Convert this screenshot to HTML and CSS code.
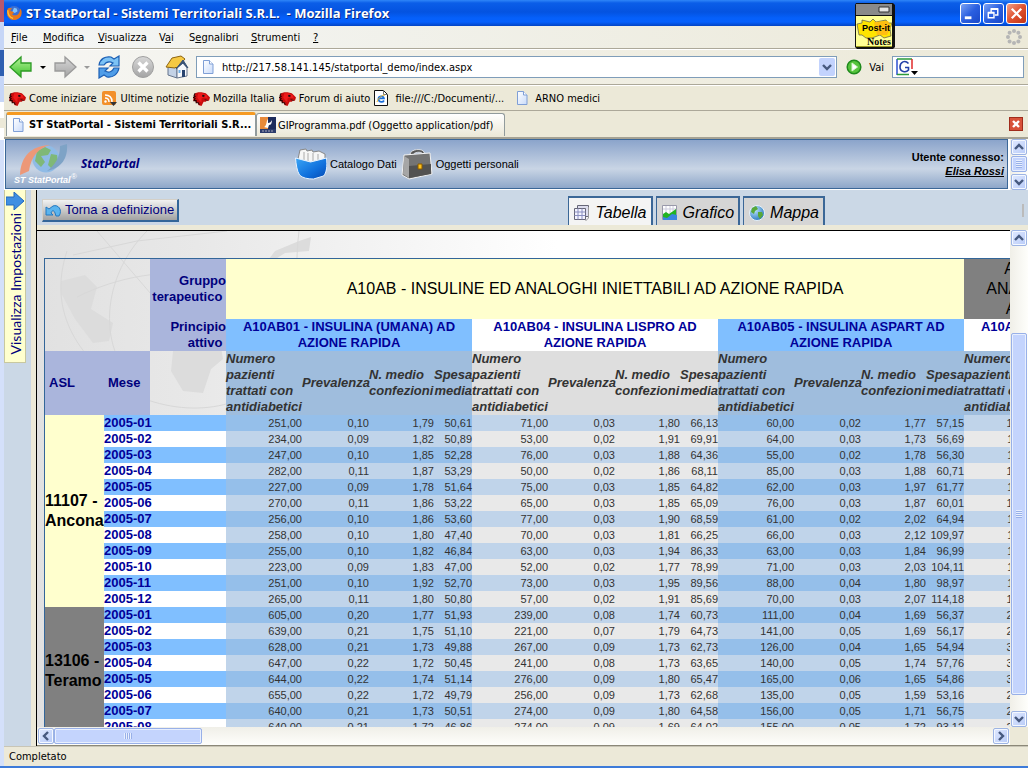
FILE: index.html
```html
<!DOCTYPE html>
<html lang="it">
<head>
<meta charset="utf-8">
<title>ST StatPortal - Sistemi Territoriali S.R.L.</title>
<link rel="stylesheet" href="styles.css">
</head>
<body>
<svg class="defs" aria-hidden="true">
  <defs>
    <linearGradient id="g-green" x1="0" y1="0" x2="0" y2="1"><stop offset="0" stop-color="#b6f29a"/><stop offset="1" stop-color="#3cc02c"/></linearGradient>
    <linearGradient id="g-grey" x1="0" y1="0" x2="0" y2="1"><stop offset="0" stop-color="#d8d8d8"/><stop offset="1" stop-color="#a4a4a4"/></linearGradient>
    <linearGradient id="g-blue" x1="0" y1="0" x2="1" y2="1"><stop offset="0" stop-color="#3ba6f6"/><stop offset=".6" stop-color="#0f6fdc"/><stop offset="1" stop-color="#0648b0"/></linearGradient>
    <linearGradient id="g-page" x1="0" y1="0" x2="1" y2="1"><stop offset="0" stop-color="#ffffff"/><stop offset="1" stop-color="#c9dbfa"/></linearGradient>
    <radialGradient id="g-globe" cx=".35" cy=".3" r=".8"><stop offset="0" stop-color="#bfe6ff"/><stop offset="1" stop-color="#1c6fb8"/></radialGradient>
    <symbol id="up" viewBox="0 0 10 10"><path d="M1 7 5 3l4 4" fill="none" stroke="#46597f" stroke-width="2.4"/></symbol>
    <symbol id="down" viewBox="0 0 10 10"><path d="M1 3l4 4 4-4" fill="none" stroke="#46597f" stroke-width="2.4"/></symbol>
    <symbol id="left" viewBox="0 0 10 10"><path d="M7 1 3 5l4 4" fill="none" stroke="#46597f" stroke-width="2.4"/></symbol>
    <symbol id="right" viewBox="0 0 10 10"><path d="M3 1l4 4-4 4" fill="none" stroke="#46597f" stroke-width="2.4"/></symbol>
    <symbol id="page" viewBox="0 0 12 14"><path d="M1.5.5h6l3.500 3.500v9.500h-9.500z" fill="url(#g-page)" stroke="#7f9fd6"/><path d="M7.500.5v3.500h3.500" fill="#fff" stroke="#7f9fd6"/></symbol>
    <symbol id="dino" viewBox="0 0 16 14"><path d="M1 5 2 2l3-1 3 0 4 1 2 2 2 2-1 3-2 0-1 1-2 0-2 4-3-1 0-2-2 0-1-2-2 0z" fill="#c80c0c"/><path d="M5 2l4 0 4 2 1 3-4-1-2 1 0 4-2-2-2-3z" fill="#ee1a1a"/><path d="M2 2 1 4l1 1-2 1 2 1-1 2 2 0 0 2 2 0 1 2" fill="none" stroke="#2a0000"/><path d="M9 4h1.500v1H9zM11 8l3 1" fill="#111" stroke="#111" stroke-width=".6"/></symbol>
  </defs>
</svg>

<div class="desktop">
  <div class="behind"></div>
  <div class="window">
    <header class="titlebar">
      <svg class="i18" viewBox="0 0 18 18"><circle cx="9" cy="9" r="8" fill="#3d6fd2"/><path d="M9 3l3 1 1 3-3 2-3-1z" fill="#7fc3ff"/><path d="M2 4c-2 5-1 9 3 12 5 2 10 0 12-4 1-3 1-6-1-8 0 3-1 5-3 7-2 1-5 1-6-1l2-1c-1-2-2-2-4-2 0-2 1-2 2-3-2-1-4-1-5 0z" fill="#e8771a"/><path d="M2 6c0 5 2 8 6 9" fill="none" stroke="#ffc33a" stroke-width="1.500"/></svg>
      <h1>ST StatPortal - Sistemi Territoriali S.R.L. &nbsp;- Mozilla Firefox</h1>
      <div class="win-buttons">
        <button type="button" class="wb" aria-label="Riduci a icona"><svg viewBox="0 0 20 20"><path d="M4 13h7v3h-7z" fill="#fff"/></svg></button>
        <button type="button" class="wb" aria-label="Ripristina"><svg viewBox="0 0 20 20"><path d="M7.500 9V5.500h7v6h-3M7 5h8" fill="none" stroke="#fff" stroke-width="1.500"/><path d="M4.500 9.500h6v5h-6zM4 9h7" fill="none" stroke="#fff" stroke-width="1.500"/></svg></button>
        <button type="button" class="wb wb-close" aria-label="Chiudi"><svg viewBox="0 0 20 20"><path d="M5 5l10 10M15 5 5 15" stroke="#fff" stroke-width="2.400"/></svg></button>
      </div>
      <div class="postit">
        <svg viewBox="0 0 41 47"><path d="M2 1h37l2 2v42l-2 2H3l-2-2V3z" fill="#111"/><path d="M2 2h36v11H2z" fill="#8a8a8a"/><path d="M25 5h10v5h-10z" fill="#e4e4e4" stroke="#333"/><path d="M2 14h36v30H2z" fill="#ffff94"/><path d="M2 44h36v1H2z" fill="#9a9a20"/><path d="M3 22l5-1 0-3 8 2 3-3 3 3 10-2 2 3 4 0-2 6 1 7-7 2-4-3-8 3-6 0-4-3-3 0z" fill="#ffe400" stroke="#555" stroke-width=".7"/><path d="M20 20l14-1 3 6-4 8-10 0z" fill="#ffbe12"/><text x="8" y="29" class="pi-a">Post-it</text><text x="13" y="43" class="pi-b">Notes</text></svg>
      </div>
    </header>

    <nav class="menubar">
      <button type="button" class="m1"><u>F</u>ile</button>
      <button type="button" class="m2"><u>M</u>odifica</button>
      <button type="button" class="m3"><u>V</u>isualizza</button>
      <button type="button" class="m4">V<u>a</u>i</button>
      <button type="button" class="m5">S<u>e</u>gnalibri</button>
      <button type="button" class="m6"><u>S</u>trumenti</button>
      <button type="button" class="m7"><u>?</u></button>
      <svg class="throbber" viewBox="0 0 16 16" fill="#b5b5b5"><circle cx="8" cy="2" r="2"/><circle cx="12.400" cy="3.800" r="2"/><circle cx="14" cy="8" r="2"/><circle cx="12.400" cy="12.400" r="2"/><circle cx="8" cy="14" r="2"/><circle cx="3.600" cy="12.400" r="2"/><circle cx="2" cy="8" r="2"/><circle cx="3.600" cy="3.800" r="2"/></svg>
    </nav>

    <div class="toolbar">
      <button type="button" aria-label="Indietro"><svg width="24" height="24" viewBox="0 0 24 24"><path d="M1 12 12 2v6h10v8H12v6z" fill="url(#g-green)" stroke="#2c9a24" stroke-width="1.300"/></svg></button>
      <span class="caret"></span>
      <button type="button" aria-label="Avanti"><svg width="24" height="24" viewBox="0 0 24 24"><path d="M23 12 12 2v6H2v8h10v6z" fill="url(#g-grey)" stroke="#9a9a9a" stroke-width="1.300"/></svg></button>
      <span class="caret caret-off"></span>
      <button type="button" aria-label="Ricarica"><svg width="24" height="24" viewBox="0 0 24 24"><path d="M2 10C3 4 8 1 14 2l3 2 5-3v10h-9l3-3c-4-2-7-1-9 2z" fill="#7cc2f5" stroke="#1c5fb4" stroke-width="1.200"/><path d="M22 13c-1 6-6 10-12 9l-3-2-5 3V13h9l-3 3c4 2 7 1 9-3z" fill="#4f9de8" stroke="#1c5fb4" stroke-width="1.200"/></svg></button>
      <button type="button" class="stop" aria-label="Ferma"><svg width="24" height="24" viewBox="0 0 24 24"><circle cx="12" cy="12" r="10.500" fill="url(#g-grey)" stroke="#a0a0a0"/><path d="M7.500 7.500l9 9M16.500 7.500l-9 9" stroke="#fff" stroke-width="3.200"/></svg></button>
      <button type="button" class="home" aria-label="Pagina iniziale"><svg width="24" height="24" viewBox="0 0 24 24"><path d="M3 11v9l9 3V11L8 5z" fill="#c3d2e6" stroke="#66758c"/><path d="M12 23V13l5-6 5 6v8z" fill="#f7f9fc" stroke="#66758c"/><path d="M1 12 7 3l9-2 4 3-8 9-1-1-1 1z" fill="#f6c943" stroke="#8e6410"/><path d="M11 14l7-9 5 8-5-5z" fill="#3a5478" stroke="#3a5478"/><path d="M17 15h3v7l-3 0z" fill="#27436e"/><path d="M13.500 15h2v3h-2z" fill="#6fb0e8"/></svg></button>
      <label class="address"><svg width="12" height="14"><use href="#page"/></svg><input type="text" aria-label="Indirizzo" value="http://217.58.141.145/statportal_demo/index.aspx"><span class="drop"><svg width="10" height="10"><use href="#down"/></svg></span></label>
      <button type="button" class="go"><svg width="16" height="16" viewBox="0 0 16 16"><circle cx="8" cy="8" r="6.800" fill="#56c43c" stroke="#1f8a1c" stroke-width="1.500"/><path d="M6 4l5.500 4L6 12z" fill="#fff" stroke="#d6f4cc"/></svg><span>Vai</span></button>
      <label class="search"><svg width="22" height="18" viewBox="0 0 22 18"><path d="M1 17V1" stroke="#2c50d0" stroke-width="1.500"/><path d="M1 1h15M1 16.500h12" stroke="#2b9a3a" stroke-width="1.500"/><path d="M16 1v10" stroke="#e02a2a" stroke-width="1.500"/><path d="M12.500 5.500C9 1.500 4 4 4 9c0 5 6 6 8.500 3V9.500H9" fill="none" stroke="#2340a8" stroke-width="1.600"/><path d="M15 13h7l-3.500 4z" fill="#000"/></svg><input type="text" aria-label="Cerca"></label>
    </div>

    <div class="bookmarks">
      <a href="#"><svg width="17" height="15"><use href="#dino"/></svg>Come iniziare</a>
      <a href="#"><svg width="17" height="15" viewBox="0 0 17 15"><rect x="1" y="0" width="14" height="14" rx="2" fill="#f2902a"/><path d="M4 4c5 0 7 3 7 7M4 7c3 0 4 2 4 4" fill="none" stroke="#fff" stroke-width="1.500"/><circle cx="4.500" cy="10.500" r="1.200" fill="#fff"/><path d="M9 11h7l-3.500 4z" fill="#333"/></svg>Ultime notizie</a>
      <a href="#"><svg width="17" height="15"><use href="#dino"/></svg>Mozilla Italia</a>
      <a href="#"><svg width="17" height="15"><use href="#dino"/></svg>Forum di aiuto</a>
      <a href="#" class="bm-file"><svg width="14" height="16" viewBox="0 0 14 16"><path d="M.5.5h9l4 4v11H.5z" fill="#fff" stroke="#111"/><path d="M9.500.5v4h4" fill="none" stroke="#777"/><path d="M10 10.500c-1 2-5 2-5.500-1C4 6 9.500 5 10 8.500H5" fill="none" stroke="#1b6fd8" stroke-width="1.700"/><path d="M3 12C4 8 8 5 11 5" fill="none" stroke="#e8b52a"/></svg>file:///C:/Documenti/...</a>
      <a href="#" class="bm-arno"><svg width="12" height="14"><use href="#page"/></svg>ARNO medici</a>
    </div>

    <div class="tabs">
      <button type="button" class="tab tab-on"><svg width="12" height="14"><use href="#page"/></svg><span>ST StatPortal - Sistemi Territoriali S.R...</span></button>
      <button type="button" class="tab"><svg width="16" height="16" viewBox="0 0 16 16"><path d="M0 0h8v12H0z" fill="#e88a3a"/><path d="M8 0h8v12H8z" fill="#1d2c5c"/><path d="M4 10c3-1 2-6 4-8v4c2 0 3-1 4-3 0 3-1 5-3 5l-1 3z" fill="#fff"/><path d="M0 12h16v4H0z" fill="#2c3c6c"/><path d="M2 14h12" stroke="#aab" stroke-dasharray="2 1"/></svg><span>GIProgramma.pdf (Oggetto application/pdf)</span></button>
      <button type="button" class="tab-close" aria-label="Chiudi scheda"><svg width="14" height="14" viewBox="0 0 14 14"><rect x=".5" y=".5" width="13" height="13" fill="#d8523a" stroke="#a02c1c"/><path d="M4 4l6 6M10 4l-6 6" stroke="#fff" stroke-width="2.400"/></svg></button>
    </div>

    <div class="header-frame">
      <div class="portal">
        <svg class="logo" width="68" height="44" viewBox="0 0 68 44"><circle cx="33" cy="17" r="13.500" fill="#8fbbe6"/><path d="M24 9l8-4 6 3-3 5-7 1 4 6-4 5-6-6zM38 12l6 1 1 7-6 7-4-4z" fill="#7fb878"/><path d="M7 33C8 14 18 4 37 3c-11 3-19 11-21 26z" fill="#ec9878"/><path d="M47 4l7-2c1 14-5 24-20 27 8-6 13-13 13-25z" fill="#7ea3c6"/><text x="1" y="41" class="logo-t">ST StatPortal</text><text x="58" y="37" class="logo-r">®</text></svg>
        <strong class="brand">StatPortal</strong>
        <a href="#" class="pl"><svg width="32" height="32" viewBox="0 0 32 32"><path d="M3 11 5 2l6-1 1 2 5-1 1 2 6-1 6 3v8l-14 4z" fill="#f6f6f6" stroke="#888"/><path d="M9 4v8M13 5v8M18 5v9M23 6v6" stroke="#aaa"/><path d="M.5 10l15 4 16-4c1 8 0 15-3 18l-10 3c-6 0-11-1-14-4C2 23 1 16 .5 10z" fill="url(#g-blue)" stroke="#e6f2ff"/></svg>Catalogo Dati</a>
        <a href="#" class="pl"><svg width="32" height="32" viewBox="0 0 32 32"><path d="M9 6c1-5 12-6 14-2l1 3-2-1c-2-3-9-2-10 1z" fill="#555" stroke="#fff" stroke-width=".7"/><path d="M3 7l26-2 2 21-23 5-7-4z" fill="#747474" stroke="#f2f2f2"/><path d="M3 8l5 3 0 19-6-4z" fill="#a6a6a6"/><path d="M8 18l22-2v10L8 30z" fill="#525252"/><path d="M17 16h4v5h-4z" fill="#ffc21a" stroke="#8a5a00"/></svg>Oggetti personali</a>
        <p class="user">Utente connesso:<a href="#">Elisa Rossi</a></p>
      </div>
      <div class="vscroll">
        <button type="button" class="sb" aria-label="Su"><svg width="10" height="10"><use href="#up"/></svg></button>
        <span class="thumb thumb-s"></span>
        <button type="button" class="sb end" aria-label="Giù"><svg width="10" height="10"><use href="#down"/></svg></button>
      </div>
    </div>

    <div class="work">
      <aside class="side">
        <button type="button" class="side-tab"><svg width="18" height="18" viewBox="0 0 18 18"><path d="M0 5h8V0l10 9-10 9v-5H0z" fill="#3f8fe2" stroke="#2268bc"/></svg><span>Visualizza Impostazioni</span></button>
      </aside>
      <main class="main">
        <div class="actions">
          <button type="button" class="back"><svg width="16" height="14" viewBox="0 0 16 14"><path d="M1 4v8h7L6 10c1-3 3-3 4 0l1 3h3c4-6-1-12-6-10L4 6z" fill="#5bb4ee" stroke="#2478c0"/></svg>Torna a definizione</button>
          <div class="views">
            <button type="button" class="view view-on"><svg width="18" height="18" viewBox="0 0 18 18"><path d="M4.500 1.500h11v11h-11z" fill="#dde" stroke="#667"/><path d="M1.500 4.500h11v11h-11z" fill="#f4f4ff" stroke="#667"/><path d="M1.500 8h11M1.500 11.500h11M5 4.500v11M9 4.500v11" stroke="#8a8fc0"/><path d="M15.500 3v11l-3 3" fill="none" stroke="#999"/></svg>Tabella</button>
            <button type="button" class="view"><svg width="18" height="18" viewBox="0 0 18 18"><path d="M1.500 1.500h14v14h-14z" fill="#fff" stroke="#99a"/><path d="M5 2v8M9 2v8M12 2v5M2 5h13" stroke="#ccd"/><path d="M2 15v-5l3-2 3 2 7-5v10z" fill="#22b422"/><path d="M2 16v-3l4 1 5-4 5 1v5z" fill="#3a86e0"/></svg>Grafico</button>
            <button type="button" class="view"><svg width="18" height="18" viewBox="0 0 18 18"><circle cx="9" cy="9" r="7.500" fill="url(#g-globe)" stroke="#e8f2fa"/><path d="M4 4l4-2 2 3-3 2-1 3-3-2zM10 8l4 0 1 3-3 4-2-3z" fill="#58a838"/></svg>Mappa</button>
          </div>
          <span class="grip"></span>
        </div>
        <div class="data-frame">
          <div class="canvas">
            <svg class="world" width="530" height="370" viewBox="0 0 530 370" fill="none" stroke="#d8d8d8" stroke-width="1"><path d="M24 50l24-6 12 12-6 22 22 14-4 18-16 2-18-24-14-26zM136 120l12-14 34-2 4 24-12 10-8 24-20-2-12-20z" fill="#dcdcdc" stroke="none"/><path d="M226 36l22-14 24-2 2-14-12 4-24 10z" fill="#dcdcdc" stroke="none"/><path d="M36 24 100 10 190 0M40 66c40-20 90-30 140-20M30 20c-20 60 10 110 70 145 60 25 120 10 150-35M110 0c-50 50-50 130 0 160M60 0l60 70M262 0c-4 30 0 60-10 90"/></svg>
            <table class="grid">
              <colgroup>
                <col class="c-asl"><col class="c-mese"><col class="c-num">
                <col class="c-num"><col class="c-prev"><col class="c-conf"><col class="c-spesa">
                <col class="c-num"><col class="c-prev"><col class="c-conf"><col class="c-spesa">
                <col class="c-num"><col class="c-prev"><col class="c-conf"><col class="c-spesa">
                <col class="c-num"><col class="c-rest">
              </colgroup>
              <thead>
                <tr class="r-group">
                  <td colspan="2" rowspan="2"></td>
                  <th class="dim">Gruppo<br>terapeutico&nbsp;</th>
                  <th colspan="12" class="g-yellow">A10AB - INSULINE ED ANALOGHI INIETTABILI AD AZIONE RAPIDA</th>
                  <th colspan="2" class="g-grey">A10AC - INSULINE ED ANALOGHI INIETTABILI AD AZIONE INTERMEDIA</th>
                </tr>
                <tr class="r-drug">
                  <th class="dim">Principio<br>attivo&nbsp;</th>
                  <th colspan="4" class="sky">A10AB01 - INSULINA (UMANA) AD AZIONE RAPIDA</th>
                  <th colspan="4" class="white">A10AB04 - INSULINA LISPRO AD AZIONE RAPIDA</th>
                  <th colspan="4" class="sky">A10AB05 - INSULINA ASPART AD AZIONE RAPIDA</th>
                  <th colspan="2" class="white">A10AC01 - INSULINA (UMANA) AD AZIONE RAPIDA</th>
                </tr>
                <tr class="r-measure">
                  <th class="dim axis">ASL</th><th class="dim axis">Mese</th><td></td>
                  <th class="ms">Numero pazienti trattati con antidiabetici</th><th class="ms">Prevalenza</th><th class="ms">N. medio confezioni</th><th class="ms rt">Spesa media</th>
                  <th class="ms mg">Numero pazienti trattati con antidiabetici</th><th class="ms mg">Prevalenza</th><th class="ms mg">N. medio confezioni</th><th class="ms mg rt">Spesa media</th>
                  <th class="ms">Numero pazienti trattati con antidiabetici</th><th class="ms">Prevalenza</th><th class="ms">N. medio confezioni</th><th class="ms rt">Spesa media</th>
                  <th class="ms">Numero pazienti trattati con antidiabetici</th><th class="ms"></th>
                </tr>
              </thead>
              <tbody id="rows"></tbody>
            </table>
          </div>
          <div class="vscroll">
            <button type="button" class="sb" aria-label="Su"><svg width="10" height="10"><use href="#up"/></svg></button>
            <span class="track-a"></span>
            <span class="thumb thumb-l"></span>
            <span class="track-b"></span>
            <button type="button" class="sb" aria-label="Giù"><svg width="10" height="10"><use href="#down"/></svg></button>
          </div>
          <div class="hscroll">
            <button type="button" class="sb" aria-label="Sinistra"><svg width="10" height="10"><use href="#left"/></svg></button>
            <span class="thumb thumb-h"></span>
            <button type="button" class="sb end" aria-label="Destra"><svg width="10" height="10"><use href="#right"/></svg></button>
          </div>
          <span class="corner"></span>
        </div>
      </main>
    </div>
    <footer class="status">Completato</footer>
  </div>
</div>
<script src="table.js"></script>
</body>
</html>
```
FILE: styles.css
```css
* { box-sizing: border-box; }
body {
  margin: 0;
  background: #ece9d8;
  color: #000;
  font: 11px "DejaVu Sans Condensed", "DejaVu Sans", sans-serif;
}
button { margin: 0; padding: 0; border: 0; background: none; color: inherit; font: inherit; }
input { border: 0; padding: 0; background: none; font: inherit; min-width: 0; flex: 1; outline: 0; }
a { color: inherit; text-decoration: none; }
svg { display: block; flex: none; }
.defs { position: absolute; width: 0; height: 0; }

.desktop { display: flex; height: 100vh; overflow: hidden; border-bottom: 2px solid #3d7bd9; }
.behind { flex: none; width: 4px; background: linear-gradient(#b7586e 0 22px, #c6d6f7 22px 50px, #2f5fb0 50px 76px, #c6d6f7 76px 102px, #fff 102px 118px, #ece9d8 118px 128px, #fff 128px 140px, #d4e0fa 140px); }
.window { flex: 1; min-width: 0; display: flex; flex-direction: column; }

.titlebar {
  position: relative; flex: none; height: 26px; display: flex; align-items: center; gap: 4px; padding: 0 1px 0 2px;
  background: linear-gradient(#2f86f8 0, #0b5ee8 3px, #0453e0 12px, #0560fa 18px, #0660fc 22px, #0344c4 26px);
}
.i18 { width: 16px; height: 16px; }
.titlebar h1 { margin: 0; flex: 1; color: #fff; font: bold 13px "Open Sans", sans-serif; text-shadow: 1px 1px #0a2a80; }
.win-buttons { display: flex; gap: 2px; }
.wb { width: 21px; height: 21px; border: 1px solid #fff; border-radius: 3px; background: linear-gradient(135deg, #7aa2f4, #2a5fe0 50%, #1a48c8); }
.wb-close { background: linear-gradient(135deg, #f0a088, #e05230 50%, #c03414); }
.postit { position: absolute; z-index: 5; left: 850px; top: 2px; width: 41px; height: 47px; }
.pi-a { font: bold 9px "Liberation Sans", sans-serif; }
.pi-b { font: bold 10px "Liberation Serif", serif; }

.menubar { flex: none; height: 23px; display: flex; align-items: center; padding: 0 6px 0 7px; background: linear-gradient(90deg, #f4f6f6, #ece9d8); border-bottom: 1px solid #aca899; }
.m1 { width: 32px; } .m2 { width: 55px; } .m3 { width: 61px; } .m4 { width: 30px; }
.m5 { width: 62px; } .m6 { width: 62px; } .m7 { width: 10px; }
.menubar button { flex: none; text-align: left; white-space: nowrap; }
.throbber { width: 16px; height: 16px; margin-left: auto; }

.toolbar { flex: none; height: 36px; display: flex; align-items: center; gap: 7px; padding: 0 4px 0 5px; background: linear-gradient(90deg, #f6f6f3, #ece9d8); border-top: 1px solid #fff; border-bottom: 1px solid #aca899; }
.caret { width: 0; height: 0; border: 3px solid transparent; border-top-color: #000; border-bottom: 0; }
.caret-off { border-top-color: #999; }
.stop, .home { margin-left: 3px; }
.address { flex: 1; height: 22px; display: flex; align-items: center; gap: 8px; padding: 0 1px 0 5px; border: 1px solid #7f9db9; background: #fff; }
.drop { display: grid; place-items: center; width: 16px; height: 18px; background: #c3d3fd; border-radius: 2px; }
.go { display: flex; align-items: center; gap: 7px; padding: 0 1px 0 2px; }
.search { width: 132px; height: 22px; display: flex; align-items: center; padding: 0 3px; border: 1px solid #7f9db9; background: #fff; }

.bookmarks { flex: none; height: 26px; display: flex; align-items: center; gap: 4px; padding: 0 5px; background: #ece9d8; border-top: 1px solid #fff; border-bottom: 1px solid #aca899; }
.bookmarks a { display: flex; align-items: center; gap: 3px; white-space: nowrap; }
.bookmarks .bm-file, .bookmarks .bm-arno { gap: 7px; }
.bookmarks .bm-arno { margin-left: 8px; }

.tabs { flex: none; height: 28px; display: flex; align-items: flex-start; padding: 1px 5px 0 2px; background: #ece9d8; border-bottom: 2px solid #a5a294; }
.tab { display: flex; align-items: center; gap: 2px; width: 249px; height: 23px; margin-top: 1px; padding: 0 4px 0 3px; background: linear-gradient(#fff, #ece9d8); border: 1px solid #919b9c; border-bottom: 0; border-radius: 3px 3px 0 0; white-space: nowrap; }
.tab-on { gap: 5px; width: 250px; height: 24px; margin-top: 0; padding-left: 5px; padding-bottom: 2px; background: #fcfcfa; border-top: 3px solid #f59a22; font: bold 11px "DejaVu Sans Condensed", sans-serif; }
.tab-close { margin: 5px 0 0 auto; }

.header-frame { flex: none; display: flex; height: 51px; background: #fff; }
.portal { flex: 1; display: flex; align-items: center; height: 50px; margin: 0 2px 0 1px; padding: 0 3px 0 7px; border: 1px solid #3b6797; background: linear-gradient(#8ba4cb, #c9d5e5 60%, #8ea7c9); font: 11px "Liberation Sans", sans-serif; }
.logo-t { font: italic bold 9px "Liberation Sans", sans-serif; fill: #fff; }
.logo-r { font: 8px "Liberation Sans", sans-serif; fill: #fff; }
.brand { width: 214px; padding-bottom: 2px; color: #00007c; font: italic bold 12px "Open Sans", sans-serif; }
.pl { display: flex; align-items: center; gap: 3px; margin-right: 4px; white-space: nowrap; }
.user { margin: 0 0 0 auto; text-align: right; font: bold 11px/14px "Liberation Sans", sans-serif; }
.user a { display: block; text-decoration: underline; font-style: italic; }

.vscroll { flex: none; width: 18px; display: flex; flex-direction: column; align-items: stretch; padding: 0 1px; background: linear-gradient(90deg, #f0efe8, #fefefb); }
.sb { display: grid; place-items: center; flex: none; width: 16px; height: 16px; border: 1px solid #9db4e4; border-radius: 2px; background: linear-gradient(135deg, #e0e9ff, #b8cbf8); box-shadow: inset 0 0 0 1px #f4f8ff; }
.end { margin-top: auto; }
.thumb { flex: none; border: 1px solid #98b0e8; border-radius: 2px; box-shadow: inset 0 0 0 1px #e8effe; }
.thumb-s { height: 16px; margin-top: 1px; background: repeating-linear-gradient(#e8effe 0 1px, #98b0e8 1px 2px) center / 6px 8px no-repeat #c4d4fd; }

.work { flex: 1; min-height: 0; display: flex; background: #cbd8e6; }
.side { flex: none; width: 32px; border-right: 5px solid #ece9d8; }
.side-tab { display: flex; flex-direction: column; align-items: center; gap: 3px; width: 22px; height: 173px; padding-top: 2px; background: #ffffce; border: 1px solid #c8c8a0; border-top: 0; color: #00007c; font: 14px Lato, sans-serif; }
.side-tab span { writing-mode: vertical-rl; transform: rotate(180deg); white-space: nowrap; }
.main { flex: 1; min-width: 0; display: flex; flex-direction: column; border-left: 1px solid #000; }
.actions { flex: none; height: 35px; display: flex; align-items: flex-end; padding: 0 4px 0 5px; }
.back { display: flex; align-items: center; gap: 4px; height: 23px; margin-bottom: 3px; padding: 0 3px 1px 2px; background: linear-gradient(#f2f2f2, #a2a2a2); border: 1px solid #d4d0c8; border-right: 2px solid #336699; border-bottom: 2px solid #336699; color: #00007c; font: 13px "Liberation Sans", sans-serif; white-space: nowrap; }
.views { display: flex; gap: 3px; margin: 0 197px 0 auto; }
.view { display: flex; align-items: center; gap: 4px; height: 29px; padding: 2px 4px 0 4px; background: #d5d5d5; border: 1px solid #3b6797; border-width: 2px 2px 0 1px; font: italic 16px "Liberation Sans", sans-serif; }
.view-on { background: #f4f4f4; }
.grip { width: 2px; height: 13px; margin-bottom: 8px; background: #bbb; }

.data-frame { flex: 1; min-height: 0; display: grid; grid-template: minmax(0, 1fr) 18px / minmax(0, 1fr) 18px; border-top: 5px solid #ece9d8; border-bottom: 1px solid #8b8878; }
.canvas { position: relative; overflow: hidden; padding: 27px 0 0 7px; border-top: 1px solid #000; background: linear-gradient(90deg, #e1e1e1, #e8e8e8 160px, #fff 520px); }
.world { position: absolute; left: 0; top: 0; }
.track-a { flex: none; height: 87px; }
.track-b { flex: 1; }
.thumb-l { height: 362px; background: repeating-linear-gradient(#e8effe 0 1px, #98b0e8 1px 2px) center / 6px 8px no-repeat #c4d4fd; }
.hscroll { display: flex; align-items: center; padding: 0 1px; background: linear-gradient(#f0efe8, #fefefb); }
.thumb-h { width: 148px; height: 16px; background: repeating-linear-gradient(90deg, #e8effe 0 1px, #98b0e8 1px 2px) center / 8px 6px no-repeat #c4d4fd; }
.hscroll .end { margin: 0 0 0 auto; }
.corner { background: #ece9d8; }

.grid { position: relative; table-layout: fixed; width: 1166px; border-collapse: separate; border-spacing: 0; border: 1px solid #336699; font: 11px "Liberation Sans", sans-serif; }
.grid td, .grid th { padding: 0; }
.c-asl { width: 59px; } .c-mese { width: 46px; } .c-num { width: 76px; } .c-prev { width: 67px; }
.c-conf { width: 65px; } .c-spesa { width: 38px; } .c-rest { width: 170px; }
.r-group { height: 60px; } .r-drug { height: 32px; } .r-measure { height: 64px; }
.dim { background: #aab5dc; color: #00007c; font-size: 13px; line-height: 16px; text-align: right; white-space: nowrap; }
.grid .axis { text-align: left; padding-left: 4px; }
.g-yellow, .g-grey { font-size: 16px; line-height: 20px; font-weight: normal; }
.g-yellow { background: #ffffce; } .g-grey { background: #808080; }
.r-drug .sky, .r-drug .white { color: #000099; font-size: 13px; line-height: 16px; }
.grid .r-drug .sky, .grid .r-drug .white { padding: 0 16px; }
.sky { background: #80bfff; } .white { background: #fff; }
.ms { background: #9fbddd; color: #333; font: italic bold 13px/16px "Liberation Sans", sans-serif; text-align: left; }
.mg { background: #dedede; } .rt { text-align: right; }
.asl { font: bold 16px/20px "Liberation Sans", sans-serif; text-align: left; }
.month { height: 16px; color: #000099; font-size: 13px; line-height: 16px; font-weight: bold; text-align: left; white-space: nowrap; }
.v { height: 16px; color: #333; line-height: 16px; text-align: right; }
.v-deep { background: #95bfea; } .v-mid { background: #c0d4ea; } .v-pale { background: #e9e9e9; }

.status { flex: none; height: 20px; padding: 0 5px; line-height: 20px; background: #ece9d8; border-top: 1px solid #c8c5b6; }
```
FILE: table.js
```js
const regions = [
  { name: "11107 -<br>Ancona", tone: "g-yellow", rows: [
    "251,00 0,10 1,79 50,61 71,00 0,03 1,80 66,13 60,00 0,02 1,77 57,15 123,00",
    "234,00 0,09 1,82 50,89 53,00 0,02 1,91 69,91 64,00 0,03 1,73 56,69 114,00",
    "247,00 0,10 1,85 52,28 76,00 0,03 1,88 64,36 55,00 0,02 1,78 56,30 119,00",
    "282,00 0,11 1,87 53,29 50,00 0,02 1,86 68,11 85,00 0,03 1,88 60,71 131,00",
    "227,00 0,09 1,78 51,64 75,00 0,03 1,85 64,82 62,00 0,03 1,97 61,77 117,00",
    "270,00 0,11 1,86 53,22 65,00 0,03 1,85 65,09 76,00 0,03 1,87 60,01 120,00",
    "256,00 0,10 1,86 53,60 77,00 0,03 1,90 68,59 61,00 0,02 2,02 64,94 112,00",
    "258,00 0,10 1,80 47,40 70,00 0,03 1,81 66,25 66,00 0,03 2,12 109,97 115,00",
    "255,00 0,10 1,82 46,84 63,00 0,03 1,94 86,33 63,00 0,03 1,84 96,99 110,00",
    "223,00 0,09 1,83 47,00 52,00 0,02 1,77 78,99 71,00 0,03 2,03 104,11 116,00",
    "251,00 0,10 1,92 52,70 73,00 0,03 1,95 89,56 88,00 0,04 1,80 98,97 118,00",
    "265,00 0,11 1,80 50,80 57,00 0,02 1,91 85,69 70,00 0,03 2,07 114,18 121,00"
  ] },
  { name: "13106 -<br>Teramo", tone: "g-grey", rows: [
    "605,00 0,20 1,77 51,93 239,00 0,08 1,74 60,73 111,00 0,04 1,69 56,37 281,00",
    "639,00 0,21 1,75 51,10 221,00 0,07 1,79 64,73 141,00 0,05 1,69 56,17 290,00",
    "628,00 0,21 1,73 49,88 267,00 0,09 1,73 62,73 126,00 0,04 1,65 54,94 302,00",
    "647,00 0,22 1,72 50,45 241,00 0,08 1,73 63,65 140,00 0,05 1,74 57,76 304,00",
    "644,00 0,22 1,74 51,14 276,00 0,09 1,80 65,47 165,00 0,06 1,65 54,86 310,00",
    "655,00 0,22 1,72 49,79 256,00 0,09 1,73 62,68 135,00 0,05 1,59 53,16 295,00",
    "640,00 0,21 1,73 50,51 274,00 0,09 1,80 64,58 156,00 0,05 1,71 56,75 288,00",
    "640,00 0,21 1,72 46,86 274,00 0,09 1,69 64,02 155,00 0,05 1,72 93,12 283,00"
  ] }
];

function toneOf(col, odd) {
  const tinted = col < 4 || (col >= 8 && col < 12);
  if (tinted) return odd ? "v-mid" : "v-deep";
  return odd ? "v-pale" : "v-mid";
}

const body = document.getElementById("rows");
for (const region of regions) {
  region.rows.forEach((line, i) => {
    const odd = i % 2 === 1;
    const tr = body.insertRow();
    let html = "";
    if (i === 0) html += `<th class="asl ${region.tone}" rowspan="${region.rows.length}">${region.name}</th>`;
    const month = String(i + 1).padStart(2, "0");
    html += `<th class="month ${odd ? "white" : "sky"}" colspan="2">2005-${month}</th>`;
    line.split(" ").forEach((value, col) => {
      html += `<td class="v ${toneOf(col, odd)}">${value}</td>`;
    });
    html += `<td class="v ${toneOf(13, odd)}"></td>`;
    tr.innerHTML = html;
  });
}
```
